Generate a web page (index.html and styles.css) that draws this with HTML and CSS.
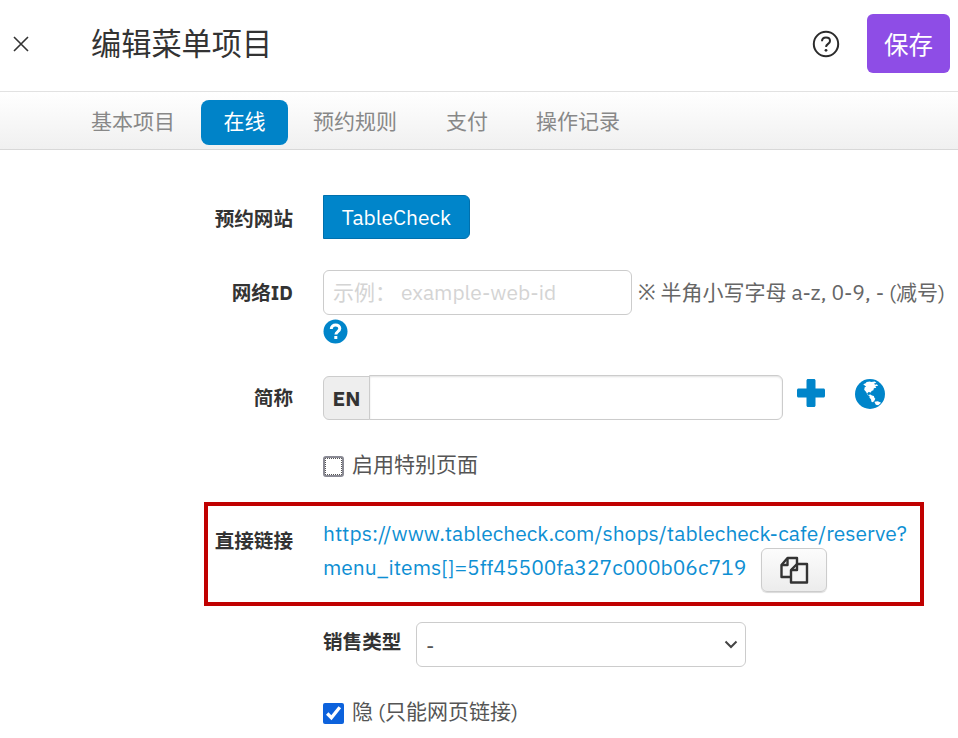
FILE: index.html
```html
<!DOCTYPE html>
<html lang="zh-CN">
<head>
<meta charset="utf-8">
<title>编辑菜单项目</title>
<link rel="stylesheet" href="styles.css">
</head>
<body>
<header class="topbar">
  <button class="close" aria-label="关闭">
    <svg width="16" height="16" viewBox="0 0 16 16"><path d="M1 1L15 15M15 1L1 15" fill="none" stroke="#333" stroke-width="1.600"/></svg>
  </button>
  <h1 class="title">编辑菜单项目</h1>
  <svg class="help" width="28" height="28" viewBox="0 0 28 28">
    <circle cx="14" cy="14" r="12.200" fill="none" stroke="#2b2b2b" stroke-width="2"/>
    <path d="M10 11.200c0-2.400 1.800-3.700 4-3.700s4 1.300 4 3.400c0 3-3.800 2.900-4 6" fill="none" stroke="#2b2b2b" stroke-width="2"/>
    <circle cx="14" cy="20.300" r="1.400" fill="#2b2b2b"/>
  </svg>
  <button class="save">保存</button>
</header>
<nav class="tabs">
  <a class="tab">基本项目</a>
  <a class="tab active">在线</a>
  <a class="tab">预约规则</a>
  <a class="tab">支付</a>
  <a class="tab">操作记录</a>
</nav>
<main class="form">
  <div class="row row-site">
    <label class="label">预约网站</label>
    <div class="content"><button class="site-btn">TableCheck</button></div>
  </div>
  <div class="row row-webid">
    <label class="label">网络ID</label>
    <div class="content">
      <div class="webid-line">
        <input class="field webid" type="text" placeholder="示例： example-web-id">
        <span class="note">※ 半角小写字母 a-z, 0-9, - (减号)</span>
      </div>
      <svg class="qmark" width="25" height="25" viewBox="0 0 25 25">
        <circle cx="12.500" cy="12.500" r="12" fill="#0085ca"/>
        <path d="M8.300 10c0-2.500 1.900-4 4.300-4s4.200 1.500 4.200 3.600c0 3-3.900 3-3.900 5.900" fill="none" stroke="#fff" stroke-width="3"/>
        <rect x="11.300" y="17" width="3" height="3" fill="#fff"/>
      </svg>
    </div>
  </div>
  <div class="row row-name">
    <label class="label">简称</label>
    <div class="content name-line">
      <div class="input-group">
        <span class="addon">EN</span>
        <input class="field name" type="text">
      </div>
      <svg class="plus" width="28" height="28" viewBox="0 0 28 28"><path d="M9.500 1.500C9.500.7 10.200 0 11 0h6c.8 0 1.500.7 1.500 1.500v8h8c.8 0 1.500.7 1.500 1.500v6c0 .8-.7 1.500-1.500 1.500h-8v8c0 .8-.7 1.500-1.500 1.500h-6c-.8 0-1.500-.7-1.500-1.500v-8h-8C.7 18.500 0 17.800 0 17v-6c0-.8.7-1.500 1.500-1.500h8z" fill="#0085ca"/></svg>
      <svg class="globe" width="30" height="30" viewBox="0 0 31 31">
        <circle cx="15.500" cy="15.500" r="15.500" fill="#0085ca"/>
        <path d="M8.500 5.500l2.500-1 1-1.500 3.500-.5 1 .5 4-.5 1.500 1.500-2.500 1 1.500 1 1.500-.5 1.500 1.500-3 .5 1 1.500-2.500.5-.5 2-2 1-.5 1.500-2.500-.5-1.500 1.500 1 1.500 2.500-.5 1.500 1 2 .5.500 2 1 1-1 2-1.500 1.500-1.500-.5-.5-2.500-1.500-1.500 0-2-2-1-1.500-3-2-2.500.5-2.500 1.500-.5z" fill="#fff"/>
        <path d="M20 23.500l3.500-.5 3.500 1.500-3 2.500-2.500-.5z" fill="#fff"/>
      </svg>
    </div>
  </div>
  <div class="row row-special">
    <div class="label"></div>
    <label class="content check-line">
      <input class="check-special" type="checkbox">
      <span class="check-text">启用特别页面</span>
    </label>
  </div>
  <section class="row highlight">
    <label class="label">直接链接</label>
    <div class="content link-text">
      <a class="link">https://www.tablecheck.com/shops/tablecheck-cafe/reserve?<br>menu_items[]=5ff45500fa327c000b06c719</a>
      <button class="copy" aria-label="复制">
        <svg width="30" height="30" viewBox="0 0 30 30" fill="none" stroke="#333" stroke-width="2.400" stroke-linejoin="round">
          <path d="M12 22H2.500V10L8.500 3h9.500v6"/>
          <path d="M2.500 10H8.500V3"/>
          <path d="M12 27.500V15l6-6h10v18.500z" fill="#f4f4f4"/>
          <path d="M12 15H18V9"/>
        </svg>
      </button>
    </div>
  </section>
  <div class="row row-sales">
    <div class="label"></div>
    <div class="content sales-line">
      <label class="label-inline">销售类型</label>
      <div class="select-wrap">
        <select class="select"><option>-</option></select>
        <svg class="chevron" width="14" height="9" viewBox="0 0 14 9"><path d="M1.500 1.500L7 7l5.500-5.500" fill="none" stroke="#444" stroke-width="2"/></svg>
      </div>
    </div>
  </div>
  <div class="row row-hidden">
    <div class="label"></div>
    <label class="content check-line">
      <input class="check-on" type="checkbox" checked>
      <span class="check-text">隐 (只能网页链接)</span>
    </label>
  </div>
</main>
</body>
</html>
```
FILE: styles.css
```css
* { box-sizing: border-box; }
html, body { margin: 0; height: 738px; overflow: hidden; }
body {
  background: #fff;
  color: #333;
  font-family: "IBM Plex Sans", "Noto Sans", "Noto Sans CJK SC", sans-serif;
  font-size: 21px;
}
button { font-family: inherit; }

.topbar {
  height: 92px;
  display: flex;
  align-items: center;
  border-bottom: 1px solid #e2e2e2;
  padding: 0 8px 0 12px;
}
.close {
  width: 18px; height: 18px; padding: 0; border: 0; background: none;
  display: flex; align-items: center; justify-content: center;
  margin-bottom: 3px;
}
.title {
  margin: 0 0 3px 61px;
  flex: 1;
  font-size: 30.200px;
  font-weight: 400;
  color: #333;
  line-height: 40px;
}
.help { margin: 0 27px 3px 0; }
.save {
  width: 83px; height: 59px;
  margin-bottom: 4px;
  background: #8e4de6;
  color: #fff;
  border: 0;
  border-radius: 6px;
  font-size: 24.500px;
}

.tabs {
  height: 58px;
  display: flex;
  align-items: flex-start;
  padding: 8px 0 0 91px;
  background: linear-gradient(#fff, #f0f0f0);
  border-bottom: 1px solid #d8d8d8;
}
.tab {
  font-size: 21px;
  color: #888;
  line-height: 43px;
  height: 45px;
  margin-right: 26px;
}
.tab:nth-child(3) { margin-right: 49px; }
.tab:nth-child(4) { margin-right: 48px; }
.tab.active {
  width: 87px;
  text-align: center;
  background: #0083c8;
  color: #fff;
  border-radius: 8px;
  margin-right: 25px;
}

.form { display: block; }
.row { display: flex; }
.label {
  flex: 0 0 293px;
  margin-right: 30px;
  text-align: right;
  font-weight: 700;
  font-size: 19.600px;
  color: #333;
}
.content { flex: 1; min-width: 0; }

.row-site { margin-top: 45px; height: 44px; align-items: center; }
.site-btn {
  height: 44px;
  width: 147px;
  background: #0085ca;
  color: #fff;
  border: 1px solid #0070ad;
  border-radius: 0 6px 6px 0;
  font-size: 21px;
  padding: 0;
}

.row-webid { margin-top: 31px; }
.row-webid .label { line-height: 46px; }
.webid-line { display: flex; align-items: center; height: 45px; }
.field {
  height: 45px;
  border: 1px solid #ccc;
  border-radius: 6px;
  background: #fff;
  font-family: inherit;
  font-size: 21px;
  padding: 0 9px;
  outline: 0;
}
.field::placeholder { color: #d4d4d4; opacity: 1; }
.webid { width: 309px; padding-bottom: 2px; }
.note { margin: -1px 0 0 6px; color: #666; white-space: nowrap; font-size: 21px; line-height: 45px; }
.qmark { display: block; margin-top: 4px; }

.row-name { margin-top: 31px; height: 45px; }
.row-name .label { line-height: 46px; }
.name-line { display: flex; align-items: flex-start; }
.input-group { display: flex; width: 460px; height: 45px; }
.addon {
  width: 47px;
  height: 44px;
  margin-top: 1px;
  background: #eee;
  border: 1px solid #ccc;
  border-right: 1px solid #ccc;
  border-radius: 6px 0 0 6px;
  font-weight: 700;
  text-align: center;
  line-height: 42px;
  font-size: 21px;
}
.name {
  flex: 1; width: 100px; margin-left: -1px;
  border-radius: 0 6px 6px 0;
  box-shadow: inset 0 1px 2px rgba(0,0,0,.12);
}
.plus { margin: 4px 0 0 14px; }
.globe { margin: 4px 0 0 30px; }

.row-special { margin-top: 36px; height: 21px; }
.check-line { display: flex; align-items: center; }
.check-special {
  appearance: none;
  width: 21px; height: 21px; margin: 0;
  border: 2px solid #8a8a94;
  border-radius: 3px;
  background: #fff;
  outline: 1px dotted #555;
  outline-offset: -3px;
}
.check-on {
  width: 21px; height: 21px; margin: 0;
  accent-color: #0d62dc;
}
.check-text { margin: 0 0 4px 8px; color: #555; line-height: 21px; }

.highlight {
  margin: 25px 0 0 204px;
  width: 720px;
  height: 104px;
  border: 4px solid #c00000;
  background: #fff;
}
.highlight .label { flex-basis: 85px; line-height: 26px; padding-top: 22px; }
.link-text { padding-top: 10px; line-height: 34px; }
.link { color: #0e8fd3; }
.copy {
  width: 66px; height: 44px;
  margin: -6px 0 -6px 10px;
  vertical-align: middle;
  padding: 0;
  background: linear-gradient(#fcfcfc, #ececec);
  border: 1px solid #ccc;
  border-radius: 6px;
  box-shadow: 0 1px 1px rgba(0,0,0,.15);
  display: inline-flex; align-items: center; justify-content: center;
}

.row-sales { margin-top: 16px; }
.sales-line { display: flex; align-items: flex-start; }
.label-inline { font-weight: 700; font-size: 19.600px; line-height: 40px; width: 93px; flex: none; color: #333; }
.select-wrap { position: relative; width: 330px; height: 45px; }
.select {
  appearance: none;
  width: 100%; height: 100%;
  border: 1px solid #ccc;
  border-radius: 6px;
  background: #fff;
  font-family: inherit;
  font-size: 21px;
  color: #555;
  padding: 0 9px;
}
.chevron { position: absolute; right: 8px; top: 18px; }

.row-hidden { margin-top: 36px; height: 21px; }
```
